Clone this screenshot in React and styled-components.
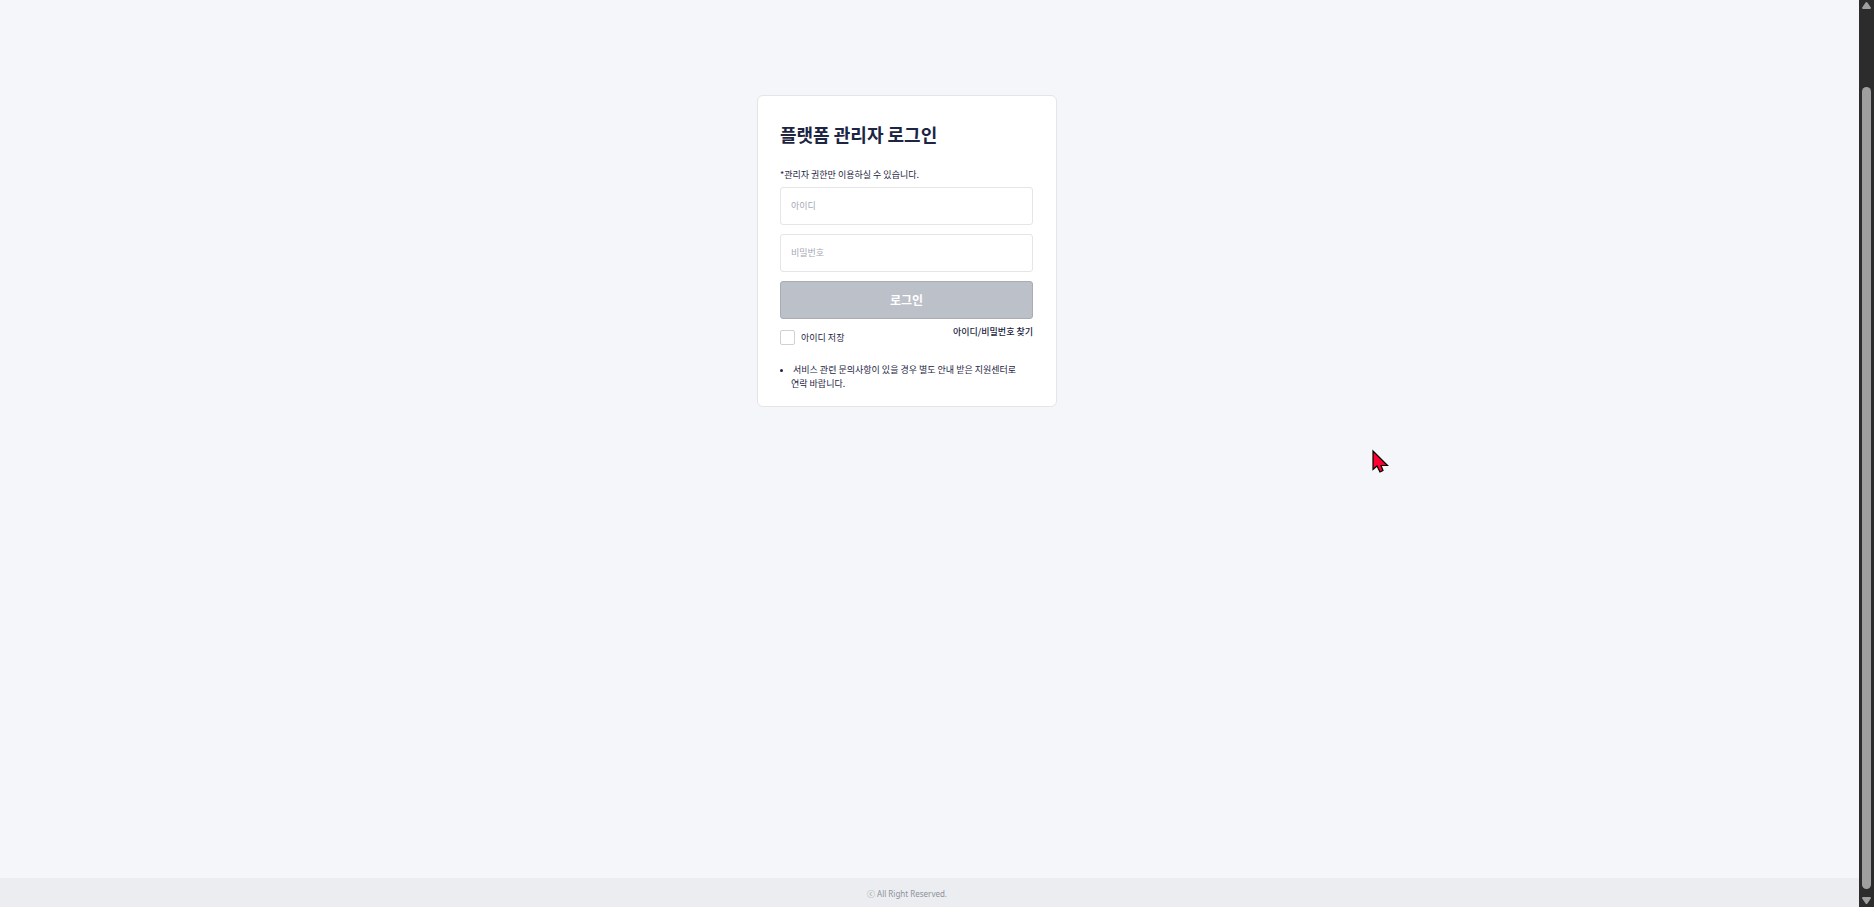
import React, { useState } from "react";
import styled, { createGlobalStyle, css } from "styled-components";

const GlobalStyle = createGlobalStyle`
  *, *::before, *::after { box-sizing: border-box; }
  html, body { margin: 0; background: #f4f6fa; }
  body, input, button {
    font-family: "Noto Sans CJK KR", "Noto Sans", sans-serif;
    font-size: 9px;
    color: #1c2542;
  }
`;

const Screen = styled.div`
  display: flex;
  height: 100vh;
  overflow: hidden;
`;

const Page = styled.div`
  flex: 1;
  display: flex;
  flex-direction: column;
  min-width: 0;
`;

const Main = styled.main`
  flex: 1;
  display: flex;
  justify-content: center;
  align-items: flex-start;
  padding: 95px 45px 0 0;
`;

const Card = styled.form`
  width: 300px;
  padding: 22px 23px 15px 22px;
  background: #ffffff;
  border: 1px solid #e4e5e7;
  border-radius: 6px;
`;

const Title = styled.h1`
  margin: 0 0 18px;
  font-size: 18px;
  line-height: 32px;
  font-weight: 700;
`;

const Notice = styled.p`
  margin: 0 0 5px;
  line-height: 14px;
`;

const Fields = styled.div`
  display: flex;
  flex-direction: column;
  gap: 9px;
`;

const control = css`
  width: 100%;
  height: 38px;
  border-radius: 3px;
  padding: 0 10px 2px;
`;

const TextField = styled.input`
  ${control}
  background: #ffffff;
  border: 1px solid #e4e5e7;
  outline: none;
  &::placeholder { color: #a5a9b5; opacity: 1; }
`;

const LoginButton = styled.button`
  ${control}
  background: #bcc0c8;
  border: 1px solid #a9acb2;
  color: #ffffff;
  font-size: 12px;
  font-weight: 700;
`;

const Options = styled.div`
  display: flex;
  justify-content: space-between;
  align-items: flex-start;
  padding-top: 6px;
`;

const SaveLabel = styled.label`
  display: flex;
  align-items: center;
  gap: 6px;
  padding-top: 5px;
  line-height: 14px;
`;

const CheckBox = styled.input`
  appearance: none;
  width: 15px;
  height: 15px;
  margin: 0;
  background: #ffffff;
  border: 1px solid #cfd1d4;
  border-radius: 2px;
  &:checked { background: #1c2542; }
`;

const FindLink = styled.a`
  color: inherit;
  font-weight: 500;
  line-height: 14px;
  text-decoration: none;
`;

const HelpList = styled.ul`
  margin: 18px 0 0;
  padding: 0 12px 0 0;
  list-style: none;
`;

const HelpItem = styled.li`
  display: flex;
  gap: 8px;
  line-height: 14px;
  word-break: keep-all;
  text-indent: 2px;
  &::before {
    content: "";
    flex: none;
    width: 3px;
    height: 3px;
    margin-top: 6px;
    border-radius: 50%;
    background: #1c2542;
  }
`;

const Footer = styled.footer`
  padding: 9px 45px 6px 0;
  background: #ebedf0;
  color: #8f9299;
  font-family: "Noto Sans", "Noto Sans CJK KR", sans-serif;
  font-size: 8px;
  line-height: 14px;
  text-align: center;
`;

const ScrollTrack = styled.div`
  flex: none;
  display: flex;
  flex-direction: column;
  align-items: center;
  width: 15px;
  padding: 2px 0 3px;
  background: #2c2c2c;
`;

const ScrollThumb = styled.div`
  flex: 1;
  width: 9px;
  margin: 78px 0 8px;
  border-radius: 5px;
  background: #9f9f9f;
`;

const Pointer = styled.svg`
  position: fixed;
  left: 1371px;
  top: 448px;
  pointer-events: none;
`;

function ScrollBar() {
  return (
    <ScrollTrack aria-hidden="true">
      <svg width="9" height="7" viewBox="0 0 9 7">
        <path d="M3.6 .6Q4.5-.4 5.4 .6L8.8 5.4Q9.2 7 8 7H1Q-.2 7 .2 5.4Z" fill="#9f9f9f" />
      </svg>
      <ScrollThumb />
      <svg width="9" height="7" viewBox="0 0 9 7">
        <path d="M3.6 6.4Q4.5 7.4 5.4 6.4L8.8 1.6Q9.2 0 8 0H1Q-.2 0 .2 1.6Z" fill="#9f9f9f" />
      </svg>
    </ScrollTrack>
  );
}

export default function App() {
  const [saveId, setSaveId] = useState(false);

  return (
    <>
      <GlobalStyle />
      <Screen>
        <Page>
          <Main>
            <Card onSubmit={(event) => event.preventDefault()}>
              <Title>플랫폼 관리자 로그인</Title>
              <Notice>*관리자 권한만 이용하실 수 있습니다.</Notice>
              <Fields>
                <TextField type="text" placeholder="아이디" aria-label="아이디" />
                <TextField type="password" placeholder="비밀번호" aria-label="비밀번호" />
                <LoginButton type="submit">로그인</LoginButton>
              </Fields>
              <Options>
                <SaveLabel htmlFor="save-id">
                  <CheckBox
                    id="save-id"
                    type="checkbox"
                    checked={saveId}
                    onChange={(event) => setSaveId(event.target.checked)}
                  />
                  아이디 저장
                </SaveLabel>
                <FindLink href="#find">아이디/비밀번호 찾기</FindLink>
              </Options>
              <HelpList>
                <HelpItem>
                  서비스 관련 문의사항이 있을 경우 별도 안내 받은 지원센터로 연락 바랍니다.
                </HelpItem>
              </HelpList>
            </Card>
          </Main>
          <Footer>ⓒ All Right Reserved.</Footer>
        </Page>
        <ScrollBar />
      </Screen>
      <Pointer width="18" height="26" viewBox="0 0 18 26" aria-hidden="true">
        <path
          d="M2 3V21.5L6 18L9 24L12 22.5L10 17.5H16.5Z"
          fill="#ff0033"
          stroke="#000000"
          strokeWidth="1.2"
        />
      </Pointer>
    </>
  );
}
